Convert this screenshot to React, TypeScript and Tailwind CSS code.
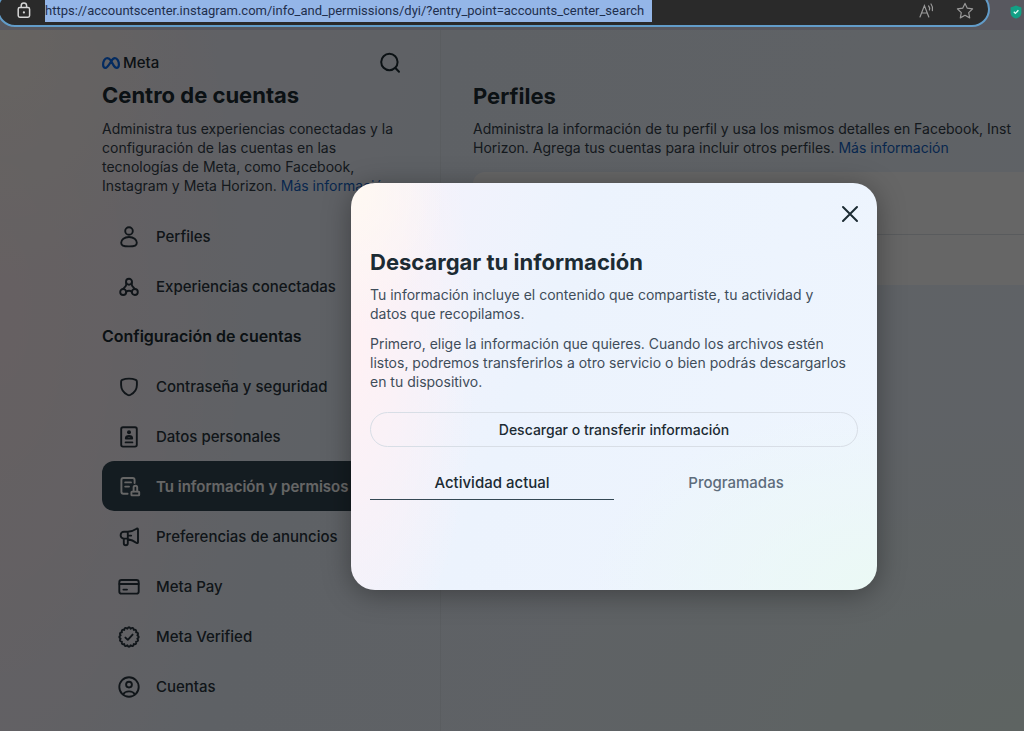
import type { ReactNode } from "react";

const SURFACE =
  "bg-[radial-gradient(ellipse_18%_36%_at_0%_0%,#fff9f2_0%,#fff9f200_100%),radial-gradient(ellipse_24%_85%_at_0%_40%,#fff1f4_0%,#fff1f400_100%),radial-gradient(ellipse_55%_45%_at_100%_100%,#ebf9f5_0%,#ebf9f500_100%),linear-gradient(110deg,#f6f2fb_0%,#ecf3fd_36%,#eef5fe_100%)]";

function Icon({ children }: { children: ReactNode }) {
  return (
    <svg
      width="24"
      height="24"
      viewBox="-12 -12 24 24"
      fill="none"
      stroke="currentColor"
      strokeWidth="1.9"
      strokeLinecap="round"
      strokeLinejoin="round"
      aria-hidden="true"
      className="shrink-0"
    >
      {children}
    </svg>
  );
}

const ProfileIcon = () => (
  <Icon>
    <circle cx="0" cy="-6" r="3.8" />
    <path d="M0 0C-4.7 0-7.8 2.6-7.8 5.8C-7.8 8.6-6 9.4 0 9.4S7.8 8.6 7.8 5.8C7.8 2.6 4.7 0 0 0Z" />
  </Icon>
);

const ConnectedIcon = () => (
  <Icon>
    <circle cx="0" cy="-5.2" r="3" />
    <circle cx="-5.8" cy="5" r="3" />
    <circle cx="5.8" cy="5" r="3" />
    <path d="M-2.8-4.4V-2.6C-2.8-.8-4-.4-5.8 2M2.8-4.4V-2.6C2.8-.8 4-.4 5.8 2M-3 5C-1 3.4 1 3.4 3 5" />
  </Icon>
);

const ShieldIcon = () => (
  <Icon>
    <path d="M0-8.4C-2.6-8.4-5-7.9-6.8-7.2C-7.6-6.8-7.9-6.2-7.9-5.2V-2C-7.9 3-5.2 6-1.2 8Q0 8.6 1.2 8C5.2 6 7.9 3 7.9-2V-5.2C7.9-6.2 7.6-6.8 6.8-7.2C5-7.9 2.6-8.4 0-8.4Z" />
  </Icon>
);

const PersonalIcon = () => (
  <Icon>
    <rect x="-7.8" y="-9.8" width="15.6" height="19.4" rx="1.8" />
    <circle cx="0" cy="-4.8" r="2" fill="currentColor" stroke="none" />
    <path d="M0-1C-2-1-3.2-.1-3.2 1.5H3.2C3.2-.1 2-1 0-1ZM-3.4 5.4H3.4" />
  </Icon>
);

const PermissionsIcon = () => (
  <Icon>
    <path d="M5.6-4V-7A2 2 0 0 0 3.6-9H-5.6A2 2 0 0 0-7.6-7V4.8A2 2 0 0 0-5.6 6.8H-1.4M-3.8-4.6H2M-3.8-.4H0" />
    <rect x="2.4" y="4.6" width="7.8" height="3.8" rx=".6" />
    <path d="M4.6 4.4V.6A1.8 1.8 0 0 1 8.2.6V4.4" />
  </Icon>
);

const MegaphoneIcon = () => (
  <Icon>
    <path d="M-1.2-5.2C3-5.4 5.6-7 7.6-8.3C8.5-8.8 9-8.4 9-7.6V5.2C9 6 8.5 6.4 7.6 5.9C5.6 4.4 3 2.8-1.2 2.2M-1.2-5.2H-5A3.4 3.4 0 0 0-5 1.6H-1.2M-1.2-5.2V6.2A2 2 0 0 1-5.2 6.2V1.6M-1.2-1.4H2.2" />
  </Icon>
);

const CardIcon = () => (
  <Icon>
    <rect x="-9.7" y="-7" width="19.4" height="13.6" rx="2.2" />
    <path d="M-9.6-3H9.6M-5.6 2.6H-2" />
  </Icon>
);

const TEETH = 16;
const BADGE_PATH =
  Array.from({ length: TEETH }, (_, i) => {
    const step = (2 * Math.PI) / TEETH;
    const at = (t: number, r: number) => `${(Math.cos(t) * r).toFixed(2)} ${(Math.sin(t) * r).toFixed(2)}`;
    const a = i * step - step / 2;
    return `${i === 0 ? `M${at(a, 8.5)}` : ""}Q${at(a + step / 2, 11.2)} ${at(a + step, 8.5)}`;
  }).join("") + "Z";

const VerifiedIcon = () => (
  <Icon>
    <path d={BADGE_PATH} />
    <path d="M-3.6.6L-1.2 2.8L3.6-2.4" />
  </Icon>
);

const AccountIcon = () => (
  <Icon>
    <circle cx="0" cy="0" r="9.7" />
    <circle cx="0" cy="-2.4" r="2.9" />
    <path d="M-5.8 7.4C-4.6 5-2.6 4.4 0 4.4S4.6 5 5.8 7.4" />
  </Icon>
);

function MetaMark() {
  return (
    <svg width="18" height="12" viewBox="0 0 18 12" fill="none" stroke="#0a6cf0" strokeWidth="2.2" strokeLinejoin="round" aria-hidden="true">
      <path d="M9 3.6C7.8 1.9 6.7 1.1 5.2 1.1C2.8 1.1 1.1 4.2 1.1 7.6C1.1 9.8 1.9 10.9 3.4 10.9C5 10.9 6 9.6 9 4.6C10.2 2.4 11.3 1.1 12.9 1.1C15.2 1.1 16.9 4.2 16.9 7.6C16.9 9.8 16.1 10.9 14.6 10.9C12.8 10.9 11.8 9.4 9 3.6Z" />
    </svg>
  );
}

function NavItem({ icon, label, active = false }: { icon: ReactNode; label: string; active?: boolean }) {
  return (
    <li>
      <a
        href="#"
        aria-current={active ? "page" : undefined}
        className={`flex h-[50px] items-center gap-[15px] rounded-xl pt-[2px] pl-[15px] text-[15px] whitespace-nowrap ${
          active ? "bg-[#344854] font-semibold text-white" : "font-medium text-[#2a3640]"
        }`}
      >
        {icon}
        {label}
      </a>
    </li>
  );
}

function AddressBar() {
  return (
    <header className="flex h-[30px] items-end overflow-hidden bg-[#58585f] pb-[3px]">
      <div className="-ml-[3px] flex h-[36px] flex-1 items-center rounded-full border-2 border-[#629cc9] bg-[#2a2a2a] pt-[3px] pr-[14px] pl-[18px]">
        <svg width="14" height="17" viewBox="0 0 14 17" fill="none" stroke="#d6d6d6" strokeWidth="1.5" aria-hidden="true" className="shrink-0">
          <rect x="1.2" y="5.6" width="11.4" height="9.6" rx="1.6" />
          <path d="M4.2 5.4V3.6A2.7 2.7 0 0 1 9.6 3.6V5.4" />
          <circle cx="6.9" cy="10.4" r="1.1" fill="#d6d6d6" stroke="none" />
        </svg>
        <input
          type="text"
          aria-label="Dirección"
          readOnly
          value="https://accountscenter.instagram.com/info_and_permissions/dyi/?entry_point=accounts_center_search"
          className="ml-[14px] h-[22px] w-[607px] bg-[#94b6e8] font-['Roboto','Noto_Sans',sans-serif] text-[13px] text-[#1f2f4d] outline-none"
        />
        <button type="button" aria-label="Leer en voz alta" className="ml-auto">
          <svg width="17" height="16" viewBox="0 0 17 16" fill="none" stroke="#9a9a9a" strokeWidth="1.2" strokeLinecap="round" aria-hidden="true">
            <path d="M1 14L5.4 2.6L9.8 14M2.6 10H8.2M9.6 3A4 4 0 0 1 10.4 7M12 1A8 8 0 0 1 13.4 7.6" />
          </svg>
        </button>
        <button type="button" aria-label="Agregar a favoritos" className="ml-[20px]">
          <svg width="18" height="18" viewBox="0 0 18 18" fill="none" stroke="#9a9a9a" strokeWidth="1.2" strokeLinejoin="round" aria-hidden="true">
            <path d="M9 1.4L11.3 6.2L16.6 6.9L12.7 10.6L13.7 15.9L9 13.3L4.3 15.9L5.3 10.6L1.4 6.9L6.7 6.2Z" />
          </svg>
        </button>
      </div>
      <button type="button" aria-label="Protección" className="mr-[2px] mb-[8px] ml-[20px]">
        <svg width="12" height="14" viewBox="0 0 12 14" aria-hidden="true">
          <path d="M6 .4L11.4 2.6V7.4C11.4 10.6 9 12.8 6 13.6C3 12.8.6 10.6.6 7.4V2.6Z" fill="#12a085" />
          <path d="M3.8 6.8L5.4 8.4L8.4 5.2" fill="none" stroke="#e6fff8" strokeWidth="1.3" />
        </svg>
      </button>
    </header>
  );
}

function Sidebar() {
  return (
    <aside className="w-[441px] shrink-0 border-r border-[#e2e9f1] pr-[39px] pl-[102px]">
      <div className="flex h-[51px] items-end justify-between pb-[7px]">
        <div className="flex items-center gap-[3px] text-[15px] leading-[22px] font-medium text-[#1c2b33]">
          <MetaMark />
          <span>Meta</span>
        </div>
        <button type="button" aria-label="Buscar" className="text-[#1c2b33]">
          <svg width="22" height="22" viewBox="0 0 22 22" fill="none" stroke="currentColor" strokeWidth="2" strokeLinecap="round" aria-hidden="true">
            <circle cx="10.4" cy="10" r="8.2" />
            <path d="M16.4 16L20 19.8" />
          </svg>
        </button>
      </div>
      <h1 className="text-[22px] leading-[28px] font-bold text-[#1c2b33]">Centro de cuentas</h1>
      <p className="mt-[10px] text-[14px] leading-[19px] whitespace-nowrap text-[#34404a]">
        Administra tus experiencias conectadas y la
        <br />
        configuración de las cuentas en las
        <br />
        tecnologías de Meta, como Facebook,
        <br />
        Instagram y Meta Horizon.{" "}
        <a href="#" className="text-[#1463c4]">
          Más información
        </a>
      </p>
      <nav aria-label="Centro de cuentas" className="mt-[16px]">
        <ul>
          <NavItem icon={<ProfileIcon />} label="Perfiles" />
          <NavItem icon={<ConnectedIcon />} label="Experiencias conectadas" />
        </ul>
        <h2 className="text-[16px] leading-[50px] font-semibold text-[#1c2b33]">Configuración de cuentas</h2>
        <ul>
          <NavItem icon={<ShieldIcon />} label="Contraseña y seguridad" />
          <NavItem icon={<PersonalIcon />} label="Datos personales" />
          <NavItem icon={<PermissionsIcon />} label="Tu información y permisos" active />
          <NavItem icon={<MegaphoneIcon />} label="Preferencias de anuncios" />
          <NavItem icon={<CardIcon />} label="Meta Pay" />
          <NavItem icon={<VerifiedIcon />} label="Meta Verified" />
          <NavItem icon={<AccountIcon />} label="Cuentas" />
        </ul>
      </nav>
    </aside>
  );
}

function Profiles() {
  return (
    <main className="min-w-0 flex-1 overflow-hidden pt-[52px] pl-[32px]">
      <h2 className="text-[22px] leading-[28px] font-bold text-[#1c2b33]">Perfiles</h2>
      <p className="mt-[9px] text-[14px] leading-[19px] whitespace-nowrap text-[#34404a]">
        Administra la información de tu perfil y usa los mismos detalles en Facebook, Inst
        <br />
        Horizon. Agrega tus cuentas para incluir otros perfiles.{" "}
        <a href="#" className="text-[#1463c4]">
          Más información
        </a>
      </p>
      <div className="mt-[15px] rounded-l-xl bg-white">
        <div className="h-[63px] border-b border-[#dee3e9]" />
        <div className="h-[50px]" />
      </div>
    </main>
  );
}

function DownloadDialog() {
  return (
    <section
      role="dialog"
      aria-labelledby="dialog-title"
      className={`w-full max-w-[526px] rounded-3xl px-[19px] pt-[19px] pb-[90px] shadow-[0_4px_28px_rgba(0,0,0,0.35)] ${SURFACE}`}
    >
      <div className="flex justify-end">
        <button type="button" aria-label="Cerrar" className="-mr-[4px] text-[#1c2b33]">
          <svg width="24" height="24" viewBox="-12 -12 24 24" fill="none" stroke="currentColor" strokeWidth="2" strokeLinecap="round" aria-hidden="true">
            <path d="M-7-7L7 7M7-7L-7 7" />
          </svg>
        </button>
      </div>
      <h2 id="dialog-title" className="mt-[22px] text-[22px] leading-[28px] font-bold text-[#1c2b33]">
        Descargar tu información
      </h2>
      <p className="mt-[9px] text-[14px] leading-[19px] whitespace-nowrap text-[#3f4d5a]">
        Tu información incluye el contenido que compartiste, tu actividad y
        <br />
        datos que recopilamos.
      </p>
      <p className="mt-[11px] text-[14px] leading-[19px] whitespace-nowrap text-[#3f4d5a]">
        Primero, elige la información que quieres. Cuando los archivos estén
        <br />
        listos, podremos transferirlos a otro servicio o bien podrás descargarlos
        <br />
        en tu dispositivo.
      </p>
      <button
        type="button"
        className="mt-[21px] h-[35px] w-full rounded-full border border-[#d8dee6] text-[14px] font-medium text-[#1c2b33]"
      >
        Descargar o transferir información
      </button>
      <div role="tablist" className="mt-[19px] grid grid-cols-2 text-[15px] font-medium">
        <button type="button" role="tab" aria-selected="true" className="h-[34px] border-b border-[#344854] pt-[2px] text-[#1c2b33]">
          Actividad actual
        </button>
        <button type="button" role="tab" aria-selected="false" className="h-[34px] border-b border-transparent pt-[2px] text-[#5d6c7b]">
          Programadas
        </button>
      </div>
    </section>
  );
}

export default function App() {
  return (
    <div className="flex min-h-screen flex-col overflow-hidden font-['Inter','Noto_Sans',sans-serif]">
      <AddressBar />
      <div className={`relative flex flex-1 ${SURFACE}`}>
        <Sidebar />
        <Profiles />
        <div className="absolute inset-0 flex items-start bg-black/60 pt-[153px] pl-[351px]">
          <DownloadDialog />
        </div>
      </div>
    </div>
  );
}
